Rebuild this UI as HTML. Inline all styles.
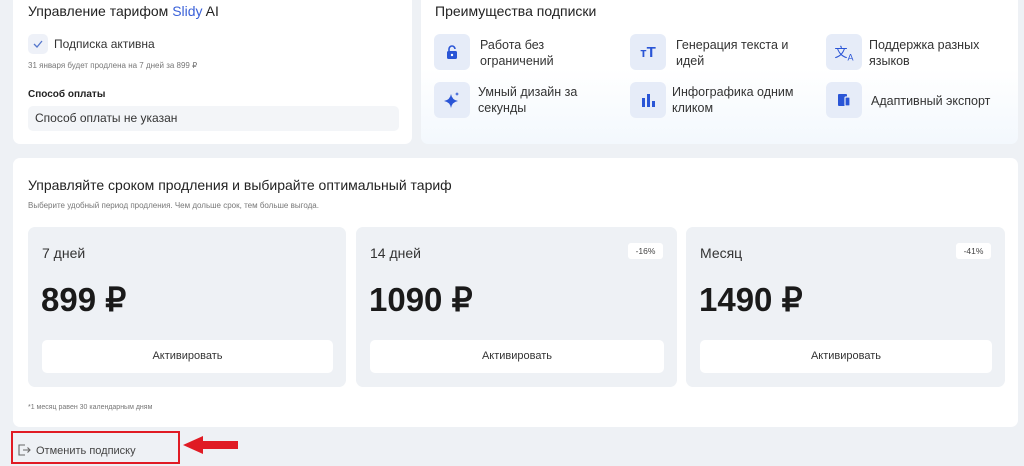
<!DOCTYPE html>
<html><head><meta charset="utf-8"><style>
*{box-sizing:border-box;margin:0;padding:0}
body{width:1024px;height:466px;background:#eef1f5;font-family:"Liberation Sans",sans-serif;color:#222;position:relative;overflow:hidden}
.abs{position:absolute}
.card{position:absolute;background:#fff;border-radius:7px}
.ic{position:absolute;width:36px;height:36px;border-radius:6px;background:#e6ecf8;display:flex;align-items:center;justify-content:center}
.ft{position:absolute;font-size:12.5px;line-height:16px;color:#333}
.plan{position:absolute;top:227px;width:320px;height:160px;background:#eef1f5;border-radius:7px}
.plan .n{position:absolute;left:14px;top:18px;font-size:14px;color:#333}
.plan .p{position:absolute;left:13px;top:53px;font-size:33px;font-weight:bold;color:#1a1a1a}
.plan .b{position:absolute;left:14px;top:113px;right:13px;height:33px;background:#fff;border-radius:5px;font-size:11px;color:#333;text-align:center;line-height:33px}
.plan .d{position:absolute;right:14px;top:16px;width:35px;height:16px;background:#fff;border-radius:3px;font-size:8.5px;color:#444;text-align:center;line-height:16px}
</style></head><body>
<div class="card" style="left:13px;top:-8px;width:399px;height:152px">
 <div class="abs" style="left:15px;top:11px;font-size:14px;color:#222">Управление тарифом <span style="color:#3b62d9">Slidy</span> AI</div>
 <div class="abs" style="left:15px;top:42px;width:20px;height:20px;border-radius:5px;background:#eef1f8"><svg width="20" height="20"><path d="M6 10l3 3 5-6" fill="none" stroke="#5577cc" stroke-width="1.3"/></svg></div>
 <div class="abs" style="left:41px;top:45px;font-size:12px;color:#333">Подписка активна</div>
 <div class="abs" style="left:15px;top:69px;font-size:8px;color:#777">31 января будет продлена на 7 дней за 899 ₽</div>
 <div class="abs" style="left:15px;top:97px;font-size:10px;font-weight:bold;color:#222">Способ оплаты</div>
 <div class="abs" style="left:15px;top:114px;width:371px;height:25px;border-radius:5px;background:#f3f5f8;font-size:12px;color:#333;padding-left:7px;line-height:25px">Способ оплаты не указан</div>
</div>
<div class="card" style="left:421px;top:-8px;width:597px;height:152px;background:linear-gradient(180deg,#fff 50%,#f3f8fd)">
 <div class="abs" style="left:14px;top:11px;font-size:14px;color:#222">Преимущества подписки</div>
</div>
<div class="ic" style="left:434px;top:34px"><svg width="16" height="16"><path d="M5 7V5a3 3 0 016 0" fill="none" stroke="#2a55d6" stroke-width="1.6"/><rect x="3" y="7" width="10" height="8" rx="1.5" fill="#2a55d6"/><circle cx="8" cy="11" r="1.2" fill="#fff"/></svg></div>
<div class="ft" style="left:480px;top:37px">Работа без<br>ограничений</div>
<div class="ic" style="left:630px;top:34px"><span style="color:#2a55d6;font-weight:bold;font-size:13px">т<span style="font-size:15px">T</span></span></div>
<div class="ft" style="left:676px;top:37px">Генерация текста и<br>идей</div>
<div class="ic" style="left:826px;top:34px"><span style="color:#2a55d6;font-size:13px">文<sub style="font-size:9px">A</sub></span></div>
<div class="ft" style="left:869px;top:37px">Поддержка разных<br>языков</div>
<div class="ic" style="left:434px;top:82px"><svg width="18" height="18"><path d="M8 3Q9 9 15 10Q9 11 8 17Q7 11 1 10Q7 9 8 3Z" fill="#2a55d6"/><path d="M14 1l.6 1.4 1.4.6-1.4.6L14 5l-.6-1.4L12 3l1.4-.6z" fill="#2a55d6"/></svg></div>
<div class="ft" style="left:478px;top:84px">Умный дизайн за<br>секунды</div>
<div class="ic" style="left:630px;top:82px"><svg width="16" height="16"><rect x="2" y="6" width="3" height="9" fill="#2a55d6"/><rect x="7" y="2" width="3" height="13" fill="#2a55d6"/><rect x="12" y="9" width="3" height="6" fill="#2a55d6"/></svg></div>
<div class="ft" style="left:672px;top:84px">Инфографика одним<br>кликом</div>
<div class="ic" style="left:826px;top:82px"><svg width="18" height="18"><rect x="3" y="3" width="9" height="12" rx="1" fill="#2a55d6"/><rect x="10" y="6" width="5" height="9" rx="1" fill="#2a55d6" stroke="#e6ecf8" stroke-width="1.2"/></svg></div>
<div class="ft" style="left:871px;top:93px">Адаптивный экспорт</div>

<div class="card" style="left:13px;top:158px;width:1005px;height:269px"></div>
<div class="abs" style="left:28px;top:177px;font-size:14px;color:#222">Управляйте сроком продления и выбирайте оптимальный тариф</div>
<div class="abs" style="left:28px;top:201px;font-size:8px;color:#777">Выберите удобный период продления. Чем дольше срок, тем больше выгода.</div>
<div class="plan" style="left:28px;width:318px"><div class="n">7 дней</div><div class="p">899 ₽</div><div class="b">Активировать</div></div>
<div class="plan" style="left:356px;width:321px"><div class="n">14 дней</div><div class="d">-16%</div><div class="p">1090 ₽</div><div class="b">Активировать</div></div>
<div class="plan" style="left:686px;width:319px"><div class="n">Месяц</div><div class="d">-41%</div><div class="p">1490 ₽</div><div class="b">Активировать</div></div>
<div class="abs" style="left:28px;top:404px;font-size:7px;color:#777">*1 месяц равен 30 календарным дням</div>

<div class="abs" style="left:11px;top:431px;width:169px;height:33px;border:2px solid #e01b24"></div>
<svg class="abs" style="left:17px;top:443px" width="14" height="14"><path d="M8 2H2v10h6M6 7h7M10.5 4.5L13 7l-2.5 2.5" fill="none" stroke="#666" stroke-width="1.1"/></svg>
<div class="abs" style="left:36px;top:445px;font-size:11px;color:#444">Отменить подписку</div>
<svg class="abs" style="left:183px;top:434px" width="58" height="22"><path d="M0 11L20 2V7H55V15H20V20Z" fill="#e01b24"/></svg>
</body></html>
